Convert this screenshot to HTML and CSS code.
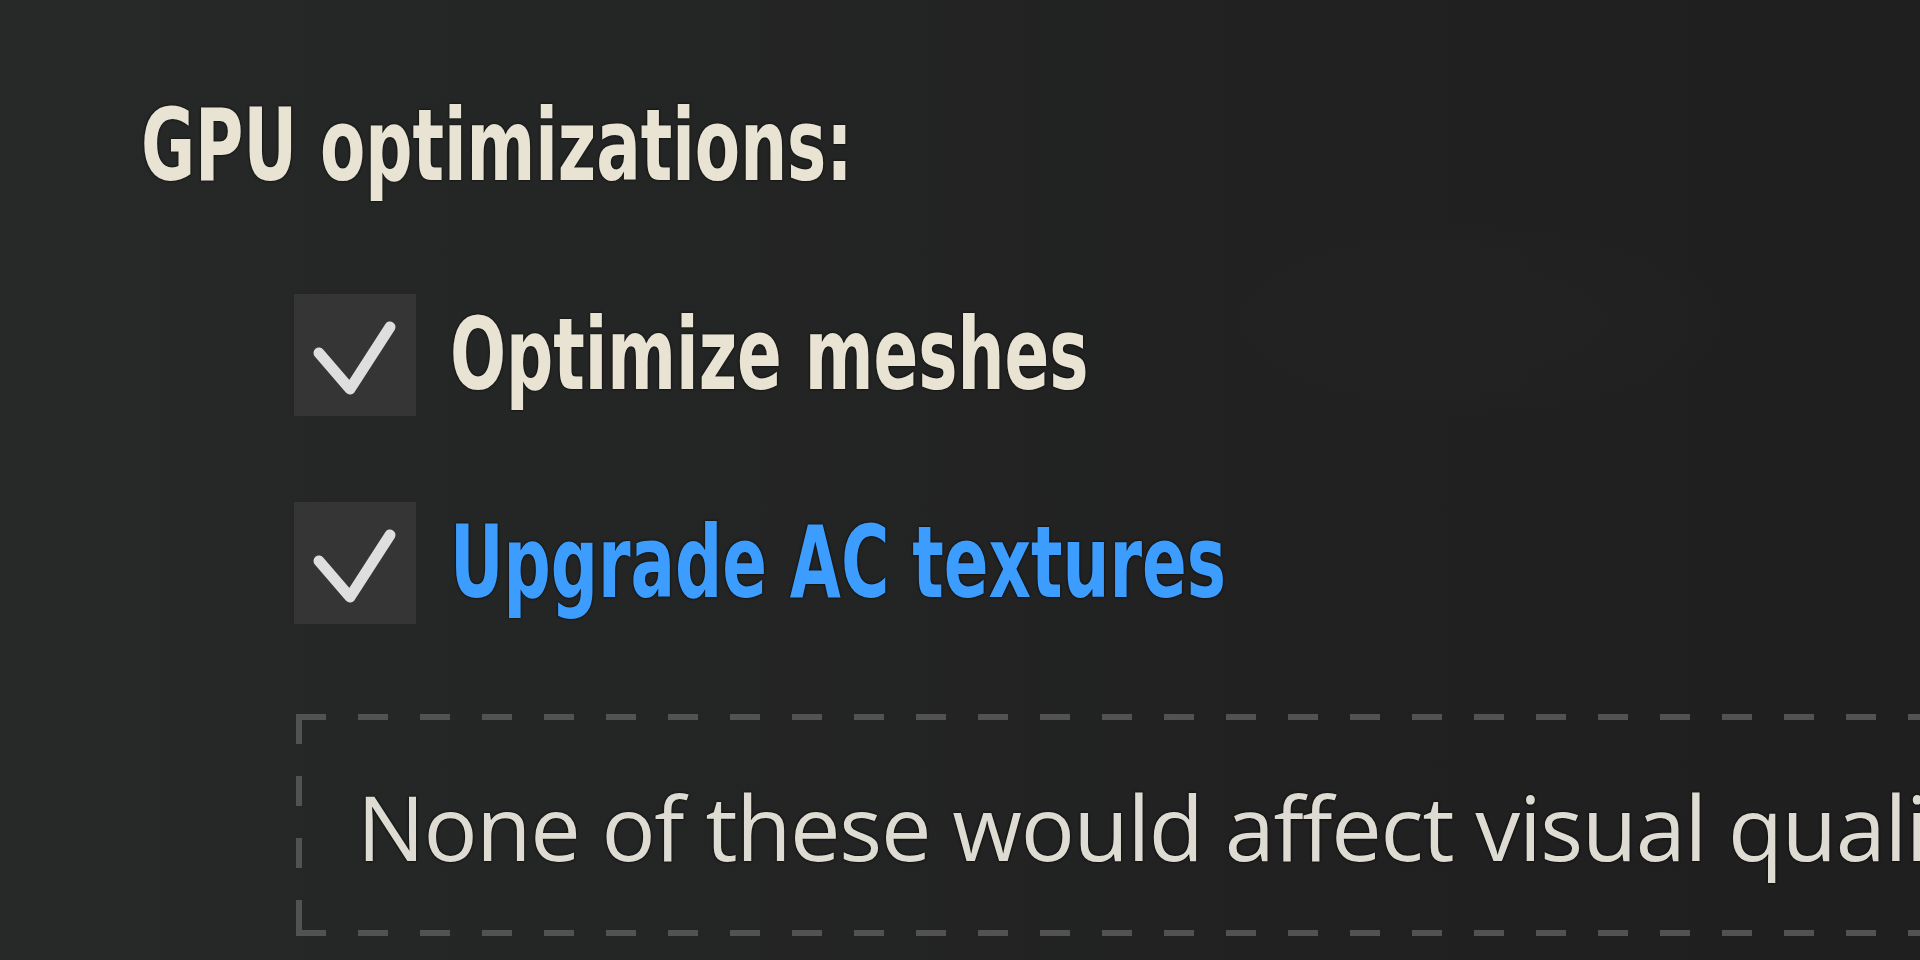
FILE: index.html
```html
<!DOCTYPE html>
<html lang="en">
<head>
    <meta charset="UTF-8">
    <meta name="viewport" content="width=device-width, initial-scale=1.0">
    <title>GPU optimizations</title>
    <link rel="stylesheet" href="styles.css">
</head>
<body>
    <div class="painel">
        <h2 class="titulo"><span>GPU optimizations:</span></h2>

        <div class="opcoes">
            <label class="opcao">
                <span class="caixa">
                    <svg viewBox="0 0 122 122" width="122" height="122"><path d="M25 59 L56 95 L96 33"/></svg>
                </span>
                <span class="texto">Optimize meshes</span>
            </label>
            <label class="opcao ativa">
                <span class="caixa">
                    <svg viewBox="0 0 122 122" width="122" height="122"><path d="M25 59 L56 95 L96 33"/></svg>
                </span>
                <span class="texto">Upgrade AC textures</span>
            </label>
        </div>

        <div class="aviso">None of these would affect visual quality, but they might improve performance.</div>
    </div>
</body>
</html>
```

FILE: styles.css
```css
html, body {
    margin: 0;
    height: 100%;
    overflow: hidden;
}
body {
    background-color: #212121;
    background-image:
        radial-gradient(ellipse 420px 160px at 1480px 320px, rgba(255,255,255,0.012), transparent 70%),
        linear-gradient(to right, #262927 0%, #242625 30%, #212121 65%, #1f1f1f 100%);
    font-family: "DejaVu Sans Condensed", "DejaVu Sans", sans-serif;
}
.painel {
    padding: 86px 0 0 141px;
}
.titulo {
    margin: 0;
    font-size: 100px;
    line-height: 120px;
    font-weight: bold;
    color: #e9e3d3;
    white-space: nowrap;
    text-shadow: 0 0 3px #000;
}
/* fonte condensada: sem versão estreita instalada */
.titulo span,
.texto {
    display: inline-block;
    transform: scaleX(0.733);
    transform-origin: left center;
}
.opcoes {
    display: flex;
    flex-direction: column;
    gap: 86px;
    margin: 88px 0 0 153px;
}
.opcao {
    display: flex;
    align-items: center;
    gap: 34px;
}
.caixa {
    width: 122px;
    height: 122px;
    background: #353535;
    flex-shrink: 0;
}
.caixa svg {
    display: block;
}
.caixa path {
    fill: none;
    stroke: #dedede;
    stroke-width: 11;
    stroke-linecap: round;
    stroke-linejoin: round;
}
.texto {
    font-size: 100px;
    line-height: 120px;
    font-weight: bold;
    color: #e9e3d3;
    white-space: nowrap;
    text-shadow: 0 0 3px #000;
}
.ativa .texto {
    color: #3d9dff;
}
.aviso {
    margin: 90px 0 0 155px;
    height: 222px;
    box-sizing: border-box;
    padding: 62px 0 0 61px;
    font-family: "Open Sans", sans-serif;
    font-size: 90px;
    font-weight: 500;
    letter-spacing: -1.3px;
    line-height: 100px;
    color: #dedbd3;
    white-space: nowrap;
    overflow: hidden;
    text-shadow: 0 0 3px #000;
    background-image:
        repeating-linear-gradient(to right, #525252 0 30px, transparent 30px 62px),
        repeating-linear-gradient(to right, #525252 0 30px, transparent 30px 62px),
        repeating-linear-gradient(to bottom, #525252 0 30px, transparent 30px 62px);
    background-size: 100% 6px, 100% 6px, 6px 100%;
    background-position: 0 0, 0 100%, 0 0;
    background-repeat: no-repeat;
}
```
